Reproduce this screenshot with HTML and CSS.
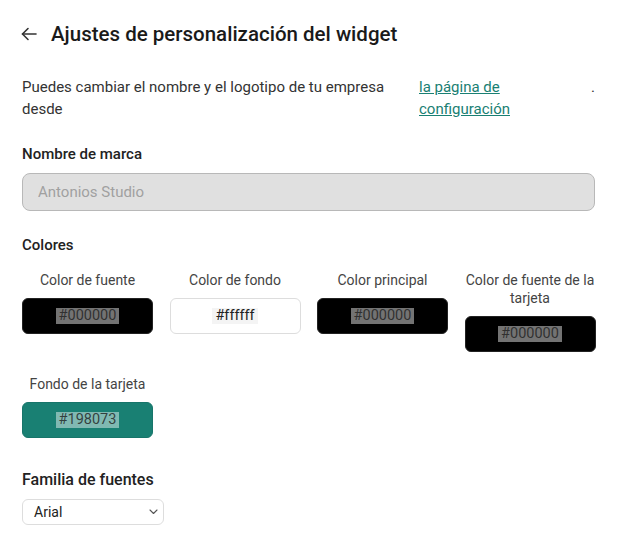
FILE: index.html
```html
<!DOCTYPE html>
<html lang="es">
<head>
    <meta charset="UTF-8">
    <meta name="viewport" content="width=device-width, initial-scale=1.0">
    <title>Ajustes de personalización del widget</title>
    <link rel="stylesheet" href="styles.css">
</head>
<body>
    <div class="page">
        <header class="page-header">
            <a href="#" class="back-link" aria-label="Volver">
                <svg width="16" height="14" viewBox="0 0 16 14" fill="none" stroke="#333" stroke-width="1.6" stroke-linecap="round" stroke-linejoin="round">
                    <path d="M15 7H1.5"/>
                    <path d="M7 1.5L1.5 7 7 12.5"/>
                </svg>
            </a>
            <h1 class="page-title">Ajustes de personalización del widget</h1>
        </header>

        <p class="intro">
            <span>Puedes cambiar el nombre y el logotipo de tu empresa desde</span>
            <a href="#" class="intro-link">la página de configuración</a>
            <span>.</span>
        </p>

        <div class="field">
            <label class="field-label">Nombre de marca</label>
            <input type="text" class="text-input" placeholder="Antonios Studio" disabled>
        </div>

        <div class="field">
            <h2 class="field-label colors-title">Colores</h2>
            <div class="color-grid">
                <div class="color-item">
                    <span class="color-label">Color de fuente</span>
                    <div class="swatch swatch-dark"><span class="hex">#000000</span></div>
                </div>
                <div class="color-item">
                    <span class="color-label">Color de fondo</span>
                    <div class="swatch swatch-light"><span class="hex">#ffffff</span></div>
                </div>
                <div class="color-item">
                    <span class="color-label">Color principal</span>
                    <div class="swatch swatch-dark"><span class="hex">#000000</span></div>
                </div>
                <div class="color-item">
                    <span class="color-label">Color de fuente de la tarjeta</span>
                    <div class="swatch swatch-dark"><span class="hex">#000000</span></div>
                </div>
                <div class="color-item">
                    <span class="color-label">Fondo de la tarjeta</span>
                    <div class="swatch swatch-teal"><span class="hex">#198073</span></div>
                </div>
            </div>
        </div>

        <div class="field font-field">
            <label class="field-label font-label">Familia de fuentes</label>
            <div class="select-wrap">
                <span class="select-value">Arial</span>
                <svg width="9" height="6" viewBox="0 0 9 6" fill="none" stroke="#555" stroke-width="1.1" stroke-linecap="round" stroke-linejoin="round">
                    <path d="M1 1l3.5 3.5L8 1"/>
                </svg>
            </div>
        </div>
    </div>
</body>
</html>
```

FILE: styles.css
```css
* {
    margin: 0;
    padding: 0;
    box-sizing: border-box;
    font-family: Roboto, 'Liberation Sans', sans-serif;
}

body {
    background: white;
    color: #333;
}

.page {
    padding: 20px 22px 0 22px;
}

.page-header {
    display: flex;
    align-items: center;
    gap: 14px;
    height: 28px;
}

.back-link {
    display: flex;
    align-items: center;
    margin-left: -1px;
}

.page-title {
    font-size: 20.5px;
    font-weight: 500;
    color: #1a1a1a;
}

.intro {
    display: grid;
    grid-template-columns: 397px 1fr auto;
    margin-top: 28px;
    font-size: 15px;
    line-height: 22px;
    color: #333;
}

.intro-link {
    color: #198073;
    text-decoration: underline;
}

.field {
    margin-top: 23px;
}

.field-label {
    display: block;
    font-size: 15px;
    font-weight: 500;
    line-height: 22px;
    color: #222;
    margin-bottom: 8px;
}

.text-input {
    display: block;
    width: 100%;
    height: 38px;
    padding: 0 15px;
    background: #e0e0e0;
    border: 1px solid #b8b8b8;
    border-radius: 8px;
    font-size: 15px;
}

.text-input::placeholder {
    color: #a0a0a0;
}

.colors-title {
    margin-top: 22px;
    margin-bottom: 15px;
}

.color-grid {
    display: grid;
    grid-template-columns: repeat(4, 131px);
    column-gap: 16.5px;
    row-gap: 23px;
    align-items: start;
}

.color-item {
    display: flex;
    flex-direction: column;
    gap: 9px;
}

.color-label {
    text-align: center;
    font-size: 14px;
    line-height: 18px;
    color: #444;
}

.swatch {
    height: 36px;
    border-radius: 6px;
    display: flex;
    align-items: center;
    justify-content: center;
}

.swatch-dark {
    background: #000;
    border: 1px solid #222;
}

.swatch-light {
    background: #fff;
    border: 1px solid #ddd;
}

.swatch-teal {
    background: #198073;
    border: 1px solid #17756a;
}

.hex {
    font-size: 14.5px;
    line-height: 16px;
    padding: 0 3px;
    background: rgba(255, 255, 255, 0.45);
    color: rgba(30, 30, 30, 0.8);
}

.swatch-light .hex {
    background: #f4f4f4;
    color: #222;
}

.font-field {
    margin-top: 31px;
}

.font-label {
    font-size: 16px;
}

.select-wrap {
    width: 142px;
    height: 26px;
    display: flex;
    align-items: center;
    justify-content: space-between;
    padding: 0 5px 0 11px;
    border: 1px solid #ddd;
    border-radius: 6px;
    font-size: 14px;
    color: #222;
}
```
